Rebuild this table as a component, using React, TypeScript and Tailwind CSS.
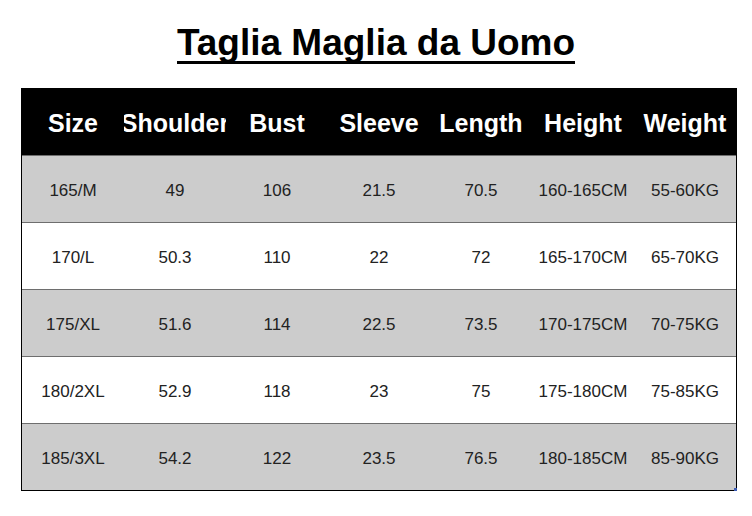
const headers = ['Size', 'Shoulder', 'Bust', 'Sleeve', 'Length', 'Height', 'Weight']

const rows = [
  ['165/M', '49', '106', '21.5', '70.5', '160-165CM', '55-60KG'],
  ['170/L', '50.3', '110', '22', '72', '165-170CM', '65-70KG'],
  ['175/XL', '51.6', '114', '22.5', '73.5', '170-175CM', '70-75KG'],
  ['180/2XL', '52.9', '118', '23', '75', '175-180CM', '75-85KG'],
  ['185/3XL', '54.2', '122', '23.5', '76.5', '180-185CM', '85-90KG'],
]

export default function App() {
  return (
    <div className="w-[752px] h-[516px] bg-white overflow-hidden font-['Liberation_Sans',Arial,sans-serif]">
      {/* titolo */}
      <div className="h-[88px] flex justify-center pt-[23px]">
        <h1 className="text-[37px] leading-[40px] font-bold text-black border-b-[3px] border-black h-[41px]">
          Taglia Maglia da Uomo
        </h1>
      </div>

      {/* tabella */}
      <div className="relative ml-[21px] w-[716px] border-x border-b border-black">
        <div className="grid grid-cols-7 h-[67px] bg-black text-white">
          {headers.map((h) => (
            <div key={h} className="flex items-center justify-center overflow-hidden whitespace-nowrap pt-[5px] text-[25px] font-bold">
              {h}
            </div>
          ))}
        </div>

        {rows.map((r, i) => (
          <div
            key={r[0]}
            className={`grid grid-cols-7 h-[67px] border-t border-[#6e6e6e] ${i % 2 === 0 ? 'bg-[#cccccc]' : 'bg-white'}`}
          >
            {r.map((c, j) => (
              <div key={j} className="flex items-center justify-center whitespace-nowrap pt-[4px] text-[17px] text-[#222222]">
                {c}
              </div>
            ))}
          </div>
        ))}

        <div className="absolute right-[-1px] bottom-[-1px] w-[3px] h-[3px] bg-[#3b5bb5]" />
      </div>
    </div>
  )
}
